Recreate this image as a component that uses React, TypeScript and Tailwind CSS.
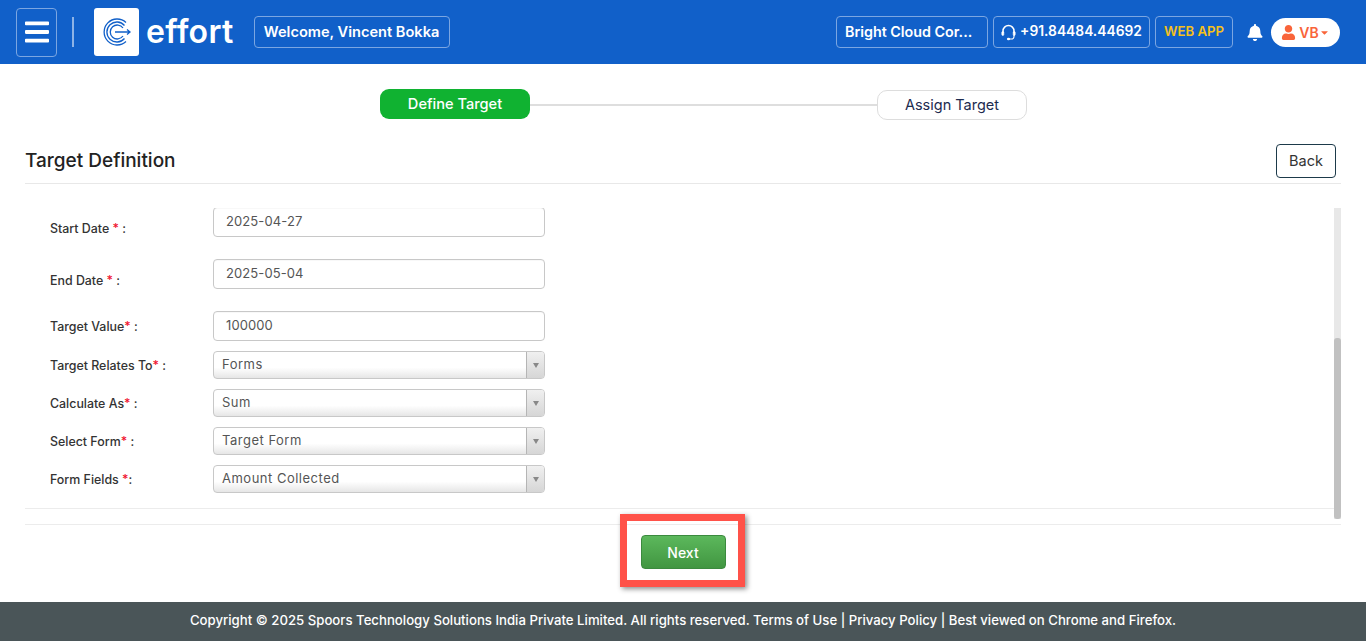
import React from "react";
import { FaBars, FaBell, FaUser, FaCaretDown } from "react-icons/fa";

const font = { fontFamily: '"Inter","Liberation Sans",sans-serif' };

function Logo() {
  return (
    <div className="w-[45px] h-[48px] bg-white rounded-[3px] flex items-center justify-center">
      <svg width="30" height="30" viewBox="0 0 30 30" fill="none" stroke="#1160c9" strokeWidth="1.3">
        <path d="M24 5.5 A13 13 0 1 0 24 24.5" />
        <path d="M22.5 8.5 A10 10 0 1 0 22.5 21.5" />
        <path d="M21 11 A7 7 0 1 0 21 19" />
        <path d="M13 15 H28 M25 12.5 L28 15 L25 17.5" />
      </svg>
    </div>
  );
}

function Headset() {
  return (
    <svg width="15" height="17" viewBox="0 0 15 17" fill="none" stroke="white" strokeWidth="1.5">
      <path d="M2 9 V7 A5.5 5.5 0 0 1 13 7 V9" />
      <rect x="0.8" y="7.5" width="2" height="4" rx="1" fill="white" strokeWidth="0.6" />
      <rect x="12.2" y="7.5" width="2" height="4" rx="1" fill="white" strokeWidth="0.6" />
      <path d="M13 11 V12.5 A2.5 2.5 0 0 1 10.5 15 H8" strokeWidth="1.1" />
      <ellipse cx="7.5" cy="15" rx="1.6" ry="1.2" fill="white" stroke="none" />
    </svg>
  );
}

const HeaderBox = ({ className = "", children }: { className?: string; children: React.ReactNode }) => (
  <div className={`h-[32px] border border-[#7ba6e2] rounded-[4px] flex items-center leading-none whitespace-nowrap ${className}`}>
    {children}
  </div>
);

function Header() {
  return (
    <header className="h-[64px] shrink-0 bg-[#1160c9] flex items-center pl-[16px] pr-[26px] text-white">
      <div className="w-[41px] h-[49px] border border-[#7ba6e2] rounded-[4px] flex items-center justify-center">
        <FaBars className="w-[24px] h-[28px] text-white" />
      </div>
      <div className="w-[2px] h-[30px] bg-[#8db3e6] ml-[15px] mr-[20px]" />
      <Logo />
      <span className="ml-[7px] text-[32px] font-semibold leading-none tracking-[0.3px]">effort</span>
      <HeaderBox className="ml-[20px] w-[196px] justify-center text-[14.6px] font-semibold">Welcome, Vincent Bokka</HeaderBox>
      <div className="ml-auto flex items-center">
        <HeaderBox className="w-[152px] pl-[8px] text-[14.3px] font-semibold">Bright Cloud Cor...</HeaderBox>
        <HeaderBox className="ml-[5px] w-[157px] justify-center gap-[4px] text-[13.8px] font-semibold">
          <Headset />
          +91.84484.44692
        </HeaderBox>
        <HeaderBox className="ml-[5px] w-[78px] justify-center text-[13.2px] font-semibold text-[#f5c01b]">WEB APP</HeaderBox>
        <FaBell className="ml-[14px] w-[16px] h-[17px]" />
        <div className="ml-[8px] w-[69px] h-[29px] bg-white rounded-full flex items-center justify-center text-[#f9643a] font-semibold text-[14px]">
          <FaUser className="w-[15px] h-[15px] mr-[3px]" />
          VB
          <FaCaretDown className="w-[11px] h-[11px]" />
        </div>
      </div>
    </header>
  );
}

function Stepper() {
  return (
    <div className="flex items-center justify-center pl-[41px] pt-[26px] h-[80px] pb-[24px]">
      <div className="w-[150px] h-[30px] rounded-[9px] bg-[#10b231] text-white text-[14.6px] font-medium flex items-center justify-center -mt-[2px] pt-[1px]">
        Define Target
      </div>
      <div className="w-[347px] h-[2px] bg-[#dedede]" />
      <div className="w-[150px] h-[30px] rounded-[10px] border border-[#dddddd] text-[#1d2b4f] text-[14.5px] flex items-center justify-center">
        Assign Target
      </div>
    </div>
  );
}

const Star = () => <span className="text-[#f0142f]">*</span>;

const Label = ({ className = "", children }: { className?: string; children: React.ReactNode }) => (
  <div className={`w-[163px] shrink-0 flex items-center text-[12.4px] font-medium text-[#333] whitespace-nowrap ${className}`}>
    <span>{children}</span>
  </div>
);

const TextRow = ({ label, value, labelClass = "", boxClass = "" }: { label: React.ReactNode; value: string; labelClass?: string; boxClass?: string }) => (
  <div className="flex items-center pl-[25px]">
    <Label className={`h-[30px] ${labelClass}`}>{label}</Label>
    <div className={`w-[332px] h-[30px] border border-[#c8c8c8] rounded-[4px] flex items-center pl-[12px] text-[13px] text-[#555] tracking-[0.1px] bg-white shadow-[inset_0_1px_1px_rgba(0,0,0,0.03)] ${boxClass}`}>
      {value}
    </div>
  </div>
);

const SelectRow = ({ label, value }: { label: React.ReactNode; value: string }) => (
  <div className="flex items-center pl-[25px] mb-[10px]">
    <Label className="h-[28px] pt-[2px]">{label}</Label>
    <div className="w-[332px] h-[28px] border border-[#c8c8c8] rounded-[4px] flex items-stretch overflow-hidden bg-gradient-to-b from-white from-60% to-[#e6e6e6]">
      <div className="flex-1 flex items-center pl-[8px] text-[13px] text-[#555] tracking-[0.5px]">{value}</div>
      <div className="w-[18px] border-l border-[#b5b5b5] bg-gradient-to-b from-[#f0f0f0] to-[#d6d6d6] flex items-center justify-center">
        <div className="w-0 h-0 border-x-[3.5px] border-x-transparent border-t-[5px] border-t-[#888]" />
      </div>
    </div>
  </div>
);

function FormPanel() {
  return (
    <div className="relative h-[311px] mx-[25px] overflow-hidden">
      <div className="absolute right-0 top-0 bottom-0 w-[7px] bg-[#e8e8e8]">
        <div className="absolute left-0 right-0 top-[130px] bottom-0 bg-[#c1c1c1] rounded-[3px]" />
      </div>
      <div className="-mt-[1px]">
        <TextRow label={<>Start Date <Star /> :</>} value="2025-04-27" labelClass="pt-[14px]" boxClass="pb-[1px]" />
      </div>
      <div className="mt-[22px]"><TextRow label={<>End Date <Star /> :</>} value="2025-05-04" labelClass="pt-[14px]" /></div>
      <div className="mt-[22px] mb-[10px]"><TextRow label={<>Target Value<Star /> :</>} value="100000" labelClass="pt-[2px]" /></div>
      <SelectRow label={<>Target Relates To<Star /> :</>} value="Forms" />
      <SelectRow label={<>Calculate As<Star /> :</>} value="Sum" />
      <SelectRow label={<>Select Form<Star /> :</>} value="Target Form" />
      <SelectRow label={<>Form Fields <Star />:</>} value="Amount Collected" />
      <div className="h-[1px] bg-[#ececec] mt-[15px] mr-[7px]" />
    </div>
  );
}

export default function App() {
  return (
    <div className="h-screen flex flex-col bg-white overflow-hidden" style={font}>
      <Header />
      <Stepper />
      <div className="mx-[25px] h-[40px] flex items-start justify-between border-b border-[#e8e8e8] pr-[5px]">
        <h1 className="text-[19px] font-medium text-[#222] leading-none pt-[7px]">Target Definition</h1>
        <button className="w-[60px] h-[34px] border border-[#1d3a4a] rounded-[4px] text-[14.5px] text-[#333] pb-[1px]">Back</button>
      </div>
      <div className="h-[24px] shrink-0" />
      <FormPanel />
      <div className="mx-[25px] h-[6px] shrink-0 border-b border-[#ececec]" />
      <div className="flex-1 flex items-start justify-center pt-[10px]">
        <div className="relative">
          <button className="block w-[85px] h-[34px] rounded-[4px] border border-[#3b8a3e] bg-gradient-to-b from-[#5cb85c] to-[#419641] text-white text-[14px] font-medium">
            Next
          </button>
          <div className="absolute -left-[21px] -top-[21px] w-[125px] h-[73px] border-[7px] border-[#ff5249] shadow-[2px_2px_5px_rgba(0,0,0,0.45)] pointer-events-none" />
        </div>
      </div>
      <footer className="h-[39px] shrink-0 bg-[#4a5558] text-white text-[13.2px] font-medium flex items-center justify-center pb-[2px]">
        Copyright © 2025 Spoors Technology Solutions India Private Limited. All rights reserved. Terms of Use | Privacy Policy | Best viewed on Chrome and Firefox.
      </footer>
    </div>
  );
}
